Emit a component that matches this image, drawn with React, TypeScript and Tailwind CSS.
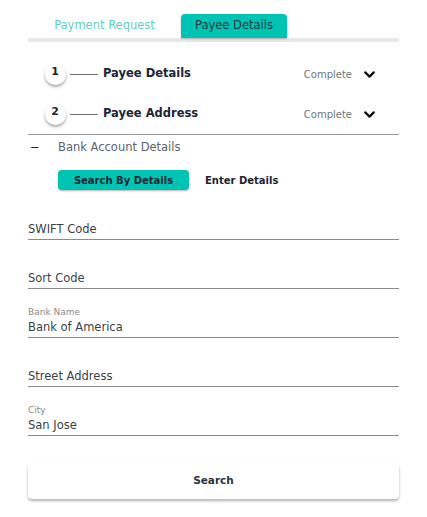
import { ChevronDown } from "lucide-react";

const font = { fontFamily: '"DejaVu Sans", "Noto Sans", sans-serif' };

function Step({ n, title }: { n: number; title: string }) {
  return (
    <div className="flex h-[40px] items-center pl-[17px] pr-[21px]">
      <div className="flex h-[21px] w-[21px] items-center justify-center rounded-full bg-white pb-[3px] pr-[1px] text-[11px] font-bold text-[#1b2533] shadow-[0_2px_3px_rgba(0,0,0,0.35)]">
        {n}
      </div>
      <div className="ml-[4px] h-px w-[28px] bg-[#6b6b6b]" />
      <div className="ml-[5px] text-[11.5px] font-bold text-[#1b2533]">{title}</div>
      <div className="ml-auto text-[10px] text-[#6f7680]">Complete</div>
      <ChevronDown className="ml-[9px] h-[17px] w-[17px] text-[#111]" strokeWidth={3.2} />
    </div>
  );
}

function Field({ label, value, placeholder }: { label?: string; value?: string; placeholder?: string }) {
  return (
    <div className="flex h-[49px] flex-col justify-end border-b border-[#8a8a8a] pb-[1px]">
      {label ? <div className="text-[9px] leading-[13px] text-[#8a8a8a]">{label}</div> : null}
      <div className="text-[11.5px] leading-[17px] text-[#3a3f47]">{value ?? placeholder}</div>
    </div>
  );
}

export default function App() {
  return (
    <div className="min-h-[517px] w-[427px] bg-white" style={font}>
      <div className="px-[28px] pt-[14px]">
        {/* tabs */}
        <div className="flex h-[24px] items-end">
          <div className="flex h-[24px] w-[153px] items-center justify-center text-[11.5px] text-[#5fcfbf]">
            Payment Request
          </div>
          <div className="flex h-[24px] w-[106px] items-center justify-center rounded-t-[4px] bg-[#00c4b3] text-[11.5px] text-[#1f3a44] shadow-[0_1px_2px_rgba(0,0,0,0.25)]">
            Payee Details
          </div>
        </div>
        <div className="h-[4px] bg-[#e8e8e8]" />

        <div className="pt-[12px]">
          <Step n={1} title="Payee Details" />
          <Step n={2} title="Payee Address" />
        </div>
        <div className="h-px bg-[#9a9a9a]" />

        <div className="mt-[2px] flex h-[22px] items-center text-[11.5px] text-[#5a6470]">
          <span className="w-[30px] pl-[2px] text-[#222]">−</span>
          <span>Bank Account Details</span>
        </div>

        <div className="mt-[11px] flex items-center pl-[30px]">
          <button className="h-[20px] w-[131px] rounded-[4px] bg-[#00c4b3] text-[10px] font-bold text-[#1b2533] shadow-[0_1px_2px_rgba(0,0,0,0.3)]">
            Search By Details
          </button>
          <span className="ml-[16px] text-[10px] font-bold text-[#1b2533]">Enter Details</span>
        </div>

        <div className="mt-[1px]">
          <Field placeholder="SWIFT Code" />
          <Field placeholder="Sort Code" />
          <Field label="Bank Name" value="Bank of America" />
          <Field placeholder="Street Address" />
          <Field label="City" value="San Jose" />
        </div>

        <button className="mt-[27px] h-[36px] w-full rounded-[4px] bg-white text-[10.5px] font-bold text-[#2a3340] shadow-[0_2px_3px_rgba(0,0,0,0.3)]">
          Search
        </button>
      </div>
    </div>
  );
}
